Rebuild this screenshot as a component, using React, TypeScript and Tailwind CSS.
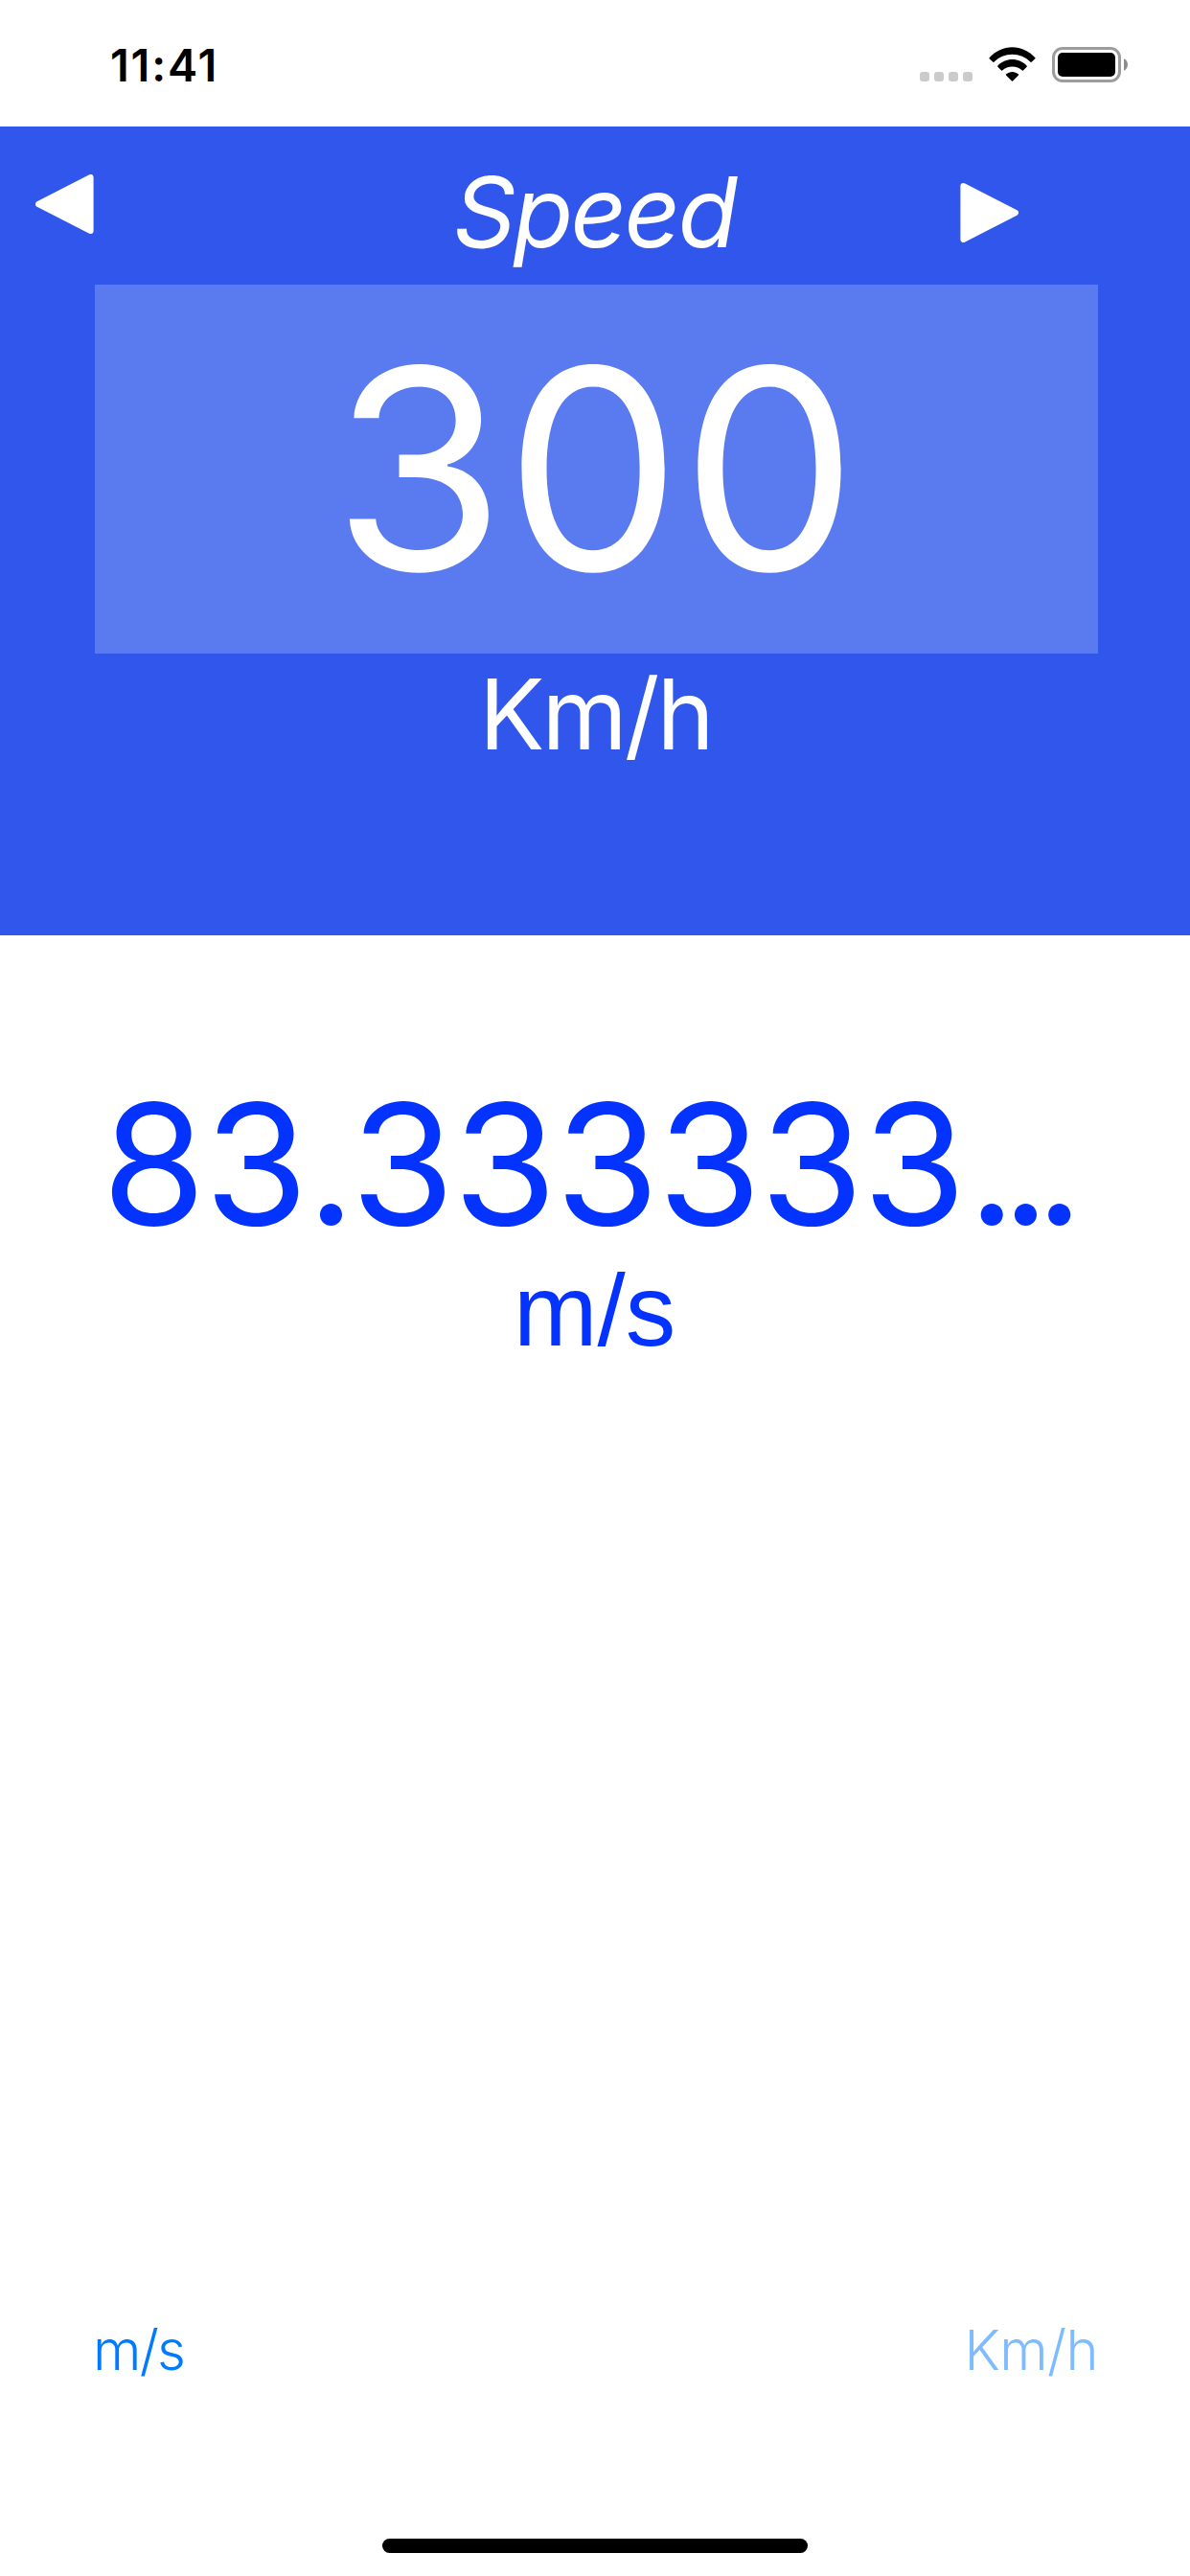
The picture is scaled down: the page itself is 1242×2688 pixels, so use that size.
function StatusBar() {
  return (
    <div className="flex h-[132px] shrink-0 items-start justify-between pl-[115px] pr-[65px] text-black">
      <div className="mt-[38px] text-[46.8px] font-semibold leading-[60px] tracking-[1.8px]">11:41</div>
      <div className="mt-[49px] flex items-start">
        <div className="mt-[26px] flex gap-[5px]">
          <span className="size-[10px] rounded-[3px] bg-[#cbcbcb]" />
          <span className="size-[10px] rounded-[3px] bg-[#cbcbcb]" />
          <span className="size-[10px] rounded-[3px] bg-[#cbcbcb]" />
          <span className="size-[10px] rounded-[3px] bg-[#cbcbcb]" />
        </div>
        <svg className="ml-[17px]" width="49" height="36" viewBox="0 0 49 36">
          <path d="M0.6 11.2C7 4.2 15.300 0.200 24.500 0.200S42 4.200 48.400 11.200Q48.900 11.700 48.400 12.200L44.600 15.800Q44.100 16.300 43.600 15.800C38.400 10.700 31.800 7.800 24.500 7.800S10.600 10.700 5.400 15.800Q4.900 16.300 4.400 15.800L0.600 12.200Q0.100 11.700 0.600 11.200Z" />
          <path d="M9.300 19.700C13.400 15.500 18.700 13.100 24.500 13.100S35.600 15.500 39.700 19.700Q40.200 20.200 39.700 20.700L35.900 24.400Q35.400 24.900 34.900 24.400C32 21.800 28.400 20.500 24.500 20.500S17 21.800 14.100 24.400Q13.600 24.900 13.100 24.400L9.300 20.700Q8.800 20.200 9.300 19.700Z" />
          <path d="M18.100 28.300C19.900 26.800 22.100 25.900 24.500 25.900S29.100 26.800 30.900 28.300Q31.500 28.800 31 29.400L25 35.500Q24.500 36 24 35.500L18 29.400Q17.500 28.800 18.100 28.300Z" />
        </svg>
        <svg className="ml-[17px]" width="79" height="37" viewBox="0 0 79 37">
          <rect x="1.500" y="1.500" width="69" height="34" rx="9.500" fill="none" stroke="#9c9c9c" strokeWidth="3" />
          <rect x="6" y="6" width="60" height="25" rx="5" />
          <path d="M75 12.200C77.400 13.300 79 15.700 79 18.500S77.400 23.700 75 24.800Z" fill="#8c8c8c" />
        </svg>
      </div>
    </div>
  );
}

function Arrow({ className }: { className: string }) {
  return (
    <svg className={className} width="61" height="62" viewBox="0 0 61 62" fill="white" stroke="white" strokeWidth="6" strokeLinejoin="round">
      <path d="M3 31L57.600 3V59Z" />
    </svg>
  );
}

export default function App() {
  return (
    <div className="flex h-[2688px] w-[1242px] flex-col overflow-hidden bg-white font-['Inter',sans-serif]">
      <StatusBar />

      <header className="flex h-[844px] shrink-0 flex-col bg-[#3056ec] text-white">
        <div className="flex h-[165px] items-start">
          <button className="ml-[37px] mt-[50px]" aria-label="Previous">
            <Arrow className="block" />
          </button>
          <h1 className="ml-[375px] mt-[29px] w-[300px] whitespace-nowrap text-[102px] font-normal italic leading-[120px] tracking-[-2.7px]">
            Speed
          </h1>
          <button className="ml-[229px] mt-[59px]" aria-label="Next">
            <Arrow className="block rotate-180" />
          </button>
        </div>
        <div className="ml-[99px] flex h-[385px] w-[1047px] items-center justify-center bg-[#5a7af0] pr-[3px] text-[291.500px] leading-none">
          300
        </div>
        <div className="h-[126px] pl-[500px] text-[101.800px] leading-[126px] tracking-[-2.900px]">Km/h</div>
      </header>

      <main className="flex flex-1 flex-col text-[#0433ff]">
        <div className="mt-[138px] whitespace-nowrap pl-[106.500px] text-[175px] leading-[200px] tracking-[-1.300px]">
          83<span className="tracking-[-4.500px]">.</span>333333<span className="ml-[3px] tracking-[-15.200px]">...</span>
        </div>
        <div className="-mt-[6px] pl-[536px] font-['Liberation_Sans',sans-serif] text-[105px] leading-[120px]">m/s</div>
        <div className="mt-auto mb-[162px] flex justify-between pl-[97px] pr-[96px] text-[57.800px] font-light leading-[70px] text-[#007aff]">
          <button className="tracking-[-1.800px]">m/s</button>
          <button className="tracking-[-0.600px] opacity-50">Km/h</button>
        </div>
      </main>

      <div className="mx-auto mb-[24px] h-[15px] w-[444px] shrink-0 rounded-full bg-black" />
    </div>
  );
}
